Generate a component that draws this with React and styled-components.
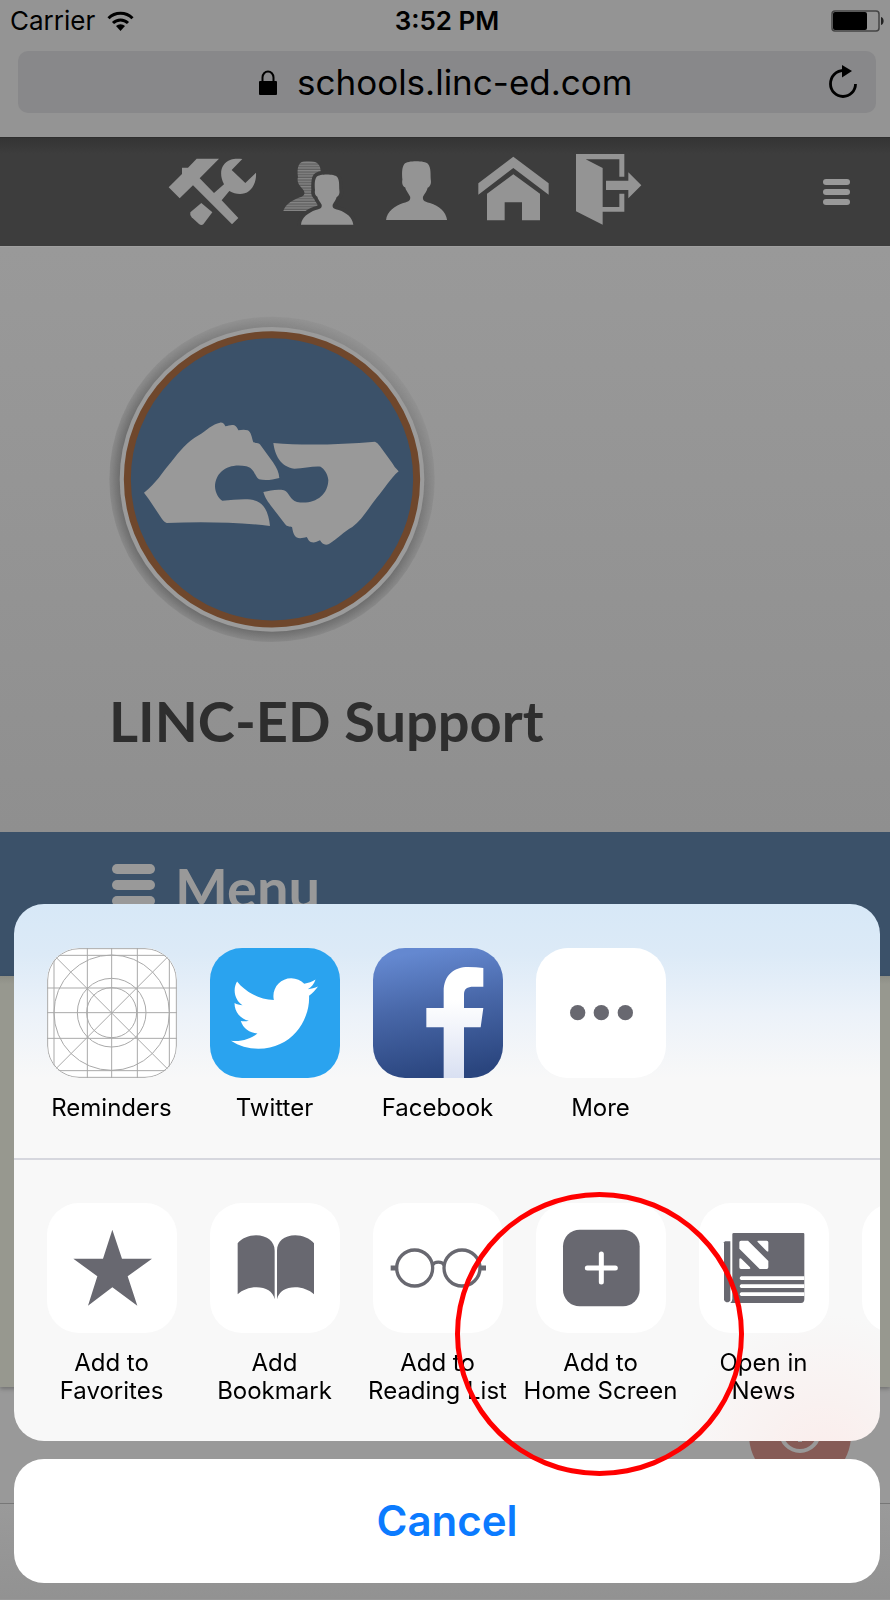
import React from "react";
import styled, { createGlobalStyle } from "styled-components";
import { FaTwitter } from "react-icons/fa";

const GlobalStyle = createGlobalStyle`
  * { box-sizing: border-box; }
  body {
    margin: 0;
    background: #999999;
    font-family: Inter, "Liberation Sans", sans-serif;
    color: #000;
  }
  button { font: inherit; color: inherit; border: 0; padding: 0; background: none; cursor: pointer; }
  h1, p { margin: 0; }
  svg { display: block; flex: none; }
`;

const Page = styled.div`
  position: relative;
  min-height: 100vh;
  display: flex;
  flex-direction: column;
  overflow: hidden;
`;

const BrowserChrome = styled.header`
  background: #949494;
  padding-bottom: 24px;
`;

const StatusBar = styled.div`
  display: grid;
  grid-template-columns: 1fr auto 1fr;
  align-items: center;
  height: 42px;
  margin-bottom: 9px;
  padding: 0 6px 0 10px;
  font-size: 26px;
  line-height: 28px;
`;

const Carrier = styled.div`
  display: flex;
  align-items: center;
  gap: 12px;
`;

const Clock = styled.time`
  font-weight: 600;
`;

const BatterySlot = styled.div`
  justify-self: end;
`;

const AddressBar = styled.form`
  display: grid;
  grid-template-columns: 1fr auto 1fr;
  align-items: center;
  height: 62px;
  margin: 0 14px 0 18px;
  padding: 0 18px 0 16px;
  border-radius: 10px;
  background: #88888a;
`;

const AddressLabel = styled.label`
  grid-column: 2;
  display: flex;
  align-items: center;
  gap: 20px;
`;

const AddressInput = styled.input`
  width: 336px;
  padding: 0;
  border: 0;
  outline: 0;
  background: none;
  font: 400 35px/44px Inter, "Liberation Sans", sans-serif;
  color: #000;
`;

const ReloadButton = styled.button`
  justify-self: end;
`;

const Toolbar = styled.nav`
  display: flex;
  align-items: center;
  gap: 24px;
  height: 109px;
  padding: 0 40px 0 168px;
  border-top: 1px solid #2e2e2e;
  background: linear-gradient(#343434, #3d3d3d 16px);
  color: #949494;
`;

const ToolLink = styled.a`
  display: block;
  padding-bottom: 4px;
  color: inherit;
`;

const MoreTools = styled.button`
  margin-left: auto;
`;

const Hero = styled.section`
  height: 586px;
  padding: 69px 40px 0 109px;
  border-top: 1px solid #a0a0a0;
  background: linear-gradient(#999999, #8f8f8f);
`;

const HeroTitle = styled.h1`
  margin-top: 43px;
  font: 700 56px/64px Lato, "Liberation Sans", sans-serif;
  color: #2e2e2e;
  white-space: nowrap;
`;

const MenuBar = styled.button`
  display: flex;
  align-items: flex-start;
  gap: 20px;
  height: 144px;
  padding: 24px 40px 0 112px;
  background: #3b5169;
  color: #999999;
  font: 700 56px/64px Lato, "Liberation Sans", sans-serif;
  text-align: left;
`;

const MenuGlyph = styled.span`
  display: flex;
  flex-direction: column;
  gap: 6px;
  padding-top: 8px;
`;

const GlyphBar = styled.span`
  width: 43px;
  height: 10px;
  border-radius: 5px;
  background: currentColor;
`;

const Panel = styled.section`
  height: 411px;
  background: linear-gradient(#8c8d85, #97988f 8px);
  box-shadow: 0 2px 4px rgba(0, 0, 0, 0.25);
`;

const Footer = styled.footer`
  flex: 1;
  padding-top: 116px;
`;

const FooterRule = styled.div`
  height: 100%;
  min-height: 96px;
  border-top: 1px solid #777;
  background: linear-gradient(#9a9a9a, #929292);
`;

const FloatingAction = styled.button`
  position: absolute;
  right: 39px;
  bottom: 114px;
`;

const Overlay = styled.div`
  position: fixed;
  inset: 0;
  display: flex;
  flex-direction: column;
  justify-content: flex-end;
  gap: 18px;
  padding: 0 10px 17px 14px;
`;

const SheetWrap = styled.div`
  position: relative;
  z-index: 1;
`;

const Sheet = styled.div`
  border-radius: 30px;
  overflow: hidden;
  background:
    radial-gradient(circle at 810px 560px, rgba(255, 215, 210, 0.35), rgba(255, 225, 220, 0) 150px),
    linear-gradient(#d7e8f7, #dceaf7 50px, #ecf2f9 110px, #f8f8f8 174px);
`;

const ShareRow = styled.div`
  display: flex;
  padding: ${(p) => (p.$divided ? "44px 0 36px 16px" : "43px 0 36px 16px")};
  border-bottom: ${(p) => (p.$divided ? "2px solid #d6d7de" : "0")};
  overflow: hidden;
`;

const ShareItem = styled.button`
  flex: 0 0 163px;
  display: flex;
  flex-direction: column;
  align-items: center;
  gap: 16px;
  font-size: 24px;
  line-height: 28px;
  text-align: center;
  white-space: pre;
`;

const Tile = styled.span`
  display: block;
  width: 130px;
  height: 130px;
  border-radius: 32px;
  overflow: hidden;
  background: ${(p) => p.$fill || "#fff"};
  color: #686870;
`;

const TileCenter = styled.span`
  display: grid;
  place-items: center;
  height: 100%;
  color: #fff;
`;

const Highlight = styled.span`
  position: absolute;
  left: 441px;
  bottom: -35px;
  width: 289px;
  height: 284px;
  border: 5px solid #ff0000;
  border-radius: 50%;
  pointer-events: none;
`;

const CancelButton = styled.button`
  height: 124px;
  border-radius: 30px;
  background: #fff;
  color: #0b7bff;
  font-size: 42px;
  font-weight: 600;
  line-height: 52px;
`;

const PERSON =
  "M453 284C455 262 475 248 497 240C514 236 516 232 515 224C510 214 503 207 502 200C496 198 493 190 495 180C494 165 493 150 500 140C508 131 553 131 561 140C569 150 567 165 568 180C570 190 567 198 560 201C558 210 552 216 548 224C547 232 549 236 566 240C590 248 607 262 610 284Z";

const WifiIcon = () => (
  <svg width="27" height="20" viewBox="0 0 27 20" aria-hidden="true">
    <path d="M1.5 7.3a17 17 0 0 1 24 0" fill="none" stroke="#000" strokeWidth="3" />
    <path d="M6 12a10.600 10.600 0 0 1 15 0" fill="none" stroke="#000" strokeWidth="3" />
    <path d="M9 15a6.400 6.400 0 0 1 9 0L13.500 20Z" />
  </svg>
);

const BatteryIcon = () => (
  <svg width="53" height="22" viewBox="0 0 53 22" role="img" aria-label="Battery">
    <rect x="1" y="1" width="47" height="20" rx="3" fill="none" stroke="#444" strokeWidth="1.500" />
    <rect x="2" y="2" width="34" height="18" rx="2" />
    <path d="M50 7C53.500 8 53.500 14 50 15Z" fill="#222" />
  </svg>
);

const LockIcon = () => (
  <svg width="18" height="25" viewBox="0 0 18 25" aria-hidden="true">
    <rect y="11" width="18" height="14" rx="1" />
    <path d="M3.500 12V7.500a5.500 6 0 0 1 11 0V12" fill="none" stroke="#000" strokeWidth="2" />
  </svg>
);

const ReloadIcon = () => (
  <svg width="30" height="34" viewBox="0 0 30 34" aria-hidden="true">
    <path d="M18 5.500C7 5 2.500 12 2.500 19A12.500 12.500 0 0 0 27.500 19" fill="none" stroke="#000" strokeWidth="2.800" />
    <path d="M14 0L24 6L14 12.500Z" />
  </svg>
);

const ToolsIcon = () => (
  <svg width="90" height="72" viewBox="54 72 270 216" fill="currentColor" aria-hidden="true">
    <path d="M56 172L96 132V113H114L140 86H207L149 145L192 189L222 163C206 132 212 100 242 89C253 85 267 86 277 87L245 120L286 159L318 128C320 158 306 182 284 190C267 195 252 190 238 183L215 211L265 264L246 283L129 166L89 205Z" />
    <path d="M121 247L154 219L187 247L160 283Q154 287 147 282L125 262Q119 254 121 247Z" />
  </svg>
);

const PeopleIcon = () => (
  <svg width="74" height="72" viewBox="396 72 222 216" fill="currentColor" aria-hidden="true">
    <defs>
      <pattern id="stripes" width="8" height="8" patternUnits="userSpaceOnUse">
        <rect width="8" height="8" fill="#606060" />
        <rect width="8" height="4" fill="#858585" />
      </pattern>
    </defs>
    <path
      fill="url(#stripes)"
      d="M400 243C406 220 432 208 455 200C466 195 466 185 457 176C446 166 440 152 444 142C440 110 446 93 470 93C500 91 512 102 512 125V170L500 243Z"
    />
    <path d={PERSON} stroke="#3d3d3d" strokeWidth="22" />
    <path d={PERSON} />
  </svg>
);

const PersonIcon = () => (
  <svg width="72" height="72" viewBox="690 72 216 216" fill="currentColor" aria-hidden="true">
    <path d={PERSON} transform="translate(180 -62) scale(1.166 1.170)" />
  </svg>
);

const HomeIcon = () => (
  <svg width="76" height="72" viewBox="168 72 228 216" fill="currentColor" aria-hidden="true">
    <path d="M175 160L280 80L386 160V194L280 114L175 194Z" />
    <path d="M201 191L280 133L360 191V271H306V217H254V271H201Z" />
  </svg>
);

const ExitIcon = () => (
  <svg width="66" height="72" viewBox="467 72 198 216" fill="currentColor" aria-hidden="true">
    <path d="M467 72H612V140H597V88H496L547 114V231H597V191H612V245H547V284L467 244Z" />
    <path d="M557 152H624V127L663 166L624 205V180H557Z" />
  </svg>
);

const HandsLogo = () => (
  <svg width="330" height="330" viewBox="27 48 990 990" role="img" aria-label="LINC-ED logo">
    <defs>
      <radialGradient id="halo" gradientUnits="userSpaceOnUse" cx="516" cy="538" r="490">
        <stop offset="0.920" stopColor="#686868" />
        <stop offset="0.960" stopColor="#757575" stopOpacity="0.850" />
        <stop offset="1" stopColor="#828282" stopOpacity="0.550" />
      </radialGradient>
      <linearGradient id="haloFade" x1="0.750" y1="0.100" x2="0.250" y2="0.900">
        <stop offset="0" stopColor="#fff" stopOpacity="0.350" />
        <stop offset="0.600" stopColor="#fff" />
      </linearGradient>
      <mask id="haloMask">
        <rect x="20" y="40" width="1000" height="1000" fill="url(#haloFade)" />
      </mask>
    </defs>
    <circle cx="516" cy="538" r="488" fill="url(#halo)" mask="url(#haloMask)" />
    <circle cx="516" cy="538" r="457" fill="#9b9b9b" />
    <circle cx="516" cy="538" r="434" fill="#3b5169" stroke="#6f472c" strokeWidth="21" />
    <path
      fill="#999"
      d="M132 578C170 548 184 520 214 485C240 453 262 425 296 406C320 390 338 372 360 368C368 367 373 371 376 379C386 377 394 373 403 376C410 379 412 385 415 391C424 389 435 388 443 391C454 396 455 413 460 427C468 430 478 428 483 437L519 487C530 504 537 517 538 534C517 540 495 542 477 538C464 530 464 505 439 499C386 488 346 515 345 560C346 579 356 595 367 602C410 600 452 591 479 608C500 622 507 650 510 678C410 666 300 664 200 669C192 667 187 658 180 648L146 597Z"
    />
    <path
      fill="#999"
      d="M520 429C620 438 724 433 825 425Q832 427 840 439L876 488Q882 500 896 514C870 536 855 565 829 595C805 626 785 660 757 681C732 694 715 715 687 732C675 737 666 732 660 721C650 725 643 730 632 726C625 723 625 717 620 711C610 714 598 717 589 712C579 703 579 693 576 681C568 679 562 681 555 672L518 624C503 605 495 593 490 576C511 572 530 567 552 571C569 578 569 600 591 606C641 615 684 588 685 540C683 521 672 506 662 500C642 497 612 506 583 506C540 500 525 465 520 429Z"
    />
  </svg>
);

const GridArt = () => (
  <svg width="130" height="130" viewBox="139 204 390 390" fill="none" stroke="#a9a9a9" strokeWidth="3" aria-hidden="true">
    <rect x="141" y="206" width="386" height="386" rx="94" />
    <path d="M160 204V594M260 204V594M333 204V594M410 204V594M506 204V594M139 226H529M139 324H529M139 398H529M139 475H529M139 572H529M160 226L506 572M506 226L160 572" />
    <circle cx="333" cy="398" r="173" />
    <circle cx="333" cy="398" r="103" />
    <circle cx="333" cy="398" r="75" />
  </svg>
);

const FacebookArt = () => (
  <svg width="130" height="130" viewBox="0 0 390 390" aria-hidden="true">
    <defs>
      <linearGradient id="fbGlyph" x1="0" y1="0" x2="0" y2="1">
        <stop offset="0.300" stopColor="#fff" />
        <stop offset="1" stopColor="#d9e0f2" />
      </linearGradient>
    </defs>
    <path
      fill="url(#fbGlyph)"
      d="M212 390V238H160V180H212V130C212 80 245 57 285 57Q310 57 331 60V116H302C282 116 273 122 273 140V180H331L323 238H273V390Z"
    />
  </svg>
);

const DotsArt = () => (
  <svg width="130" height="130" viewBox="0 0 390 390" fill="currentColor" aria-hidden="true">
    <circle cx="125" cy="194" r="23" />
    <circle cx="196" cy="194" r="23" />
    <circle cx="268" cy="194" r="23" />
  </svg>
);

const StarArt = () => (
  <svg width="130" height="130" viewBox="139 69 390 390" fill="currentColor" aria-hidden="true">
    <path d="M335 149L364 236H454L381 289L410 377L335 322L262 377L290 289L218 236H307Z" />
  </svg>
);

const BookArt = () => (
  <svg width="130" height="130" viewBox="628 69 390 390" fill="currentColor" aria-hidden="true">
    <path d="M711 190C722 175 745 166 766 166C800 166 822 185 822 212V358C818 335 795 322 768 322C745 322 725 330 711 343Z" />
    <path d="M940 190C928 175 905 166 884 166C850 166 829 185 829 212V358C834 335 856 322 883 322C905 322 926 330 940 343Z" />
  </svg>
);

const GlassesArt = () => (
  <svg width="130" height="130" viewBox="1118 69 390 390" fill="none" stroke="currentColor" strokeWidth="10" aria-hidden="true">
    <circle cx="1243" cy="264" r="54" />
    <circle cx="1385" cy="264" r="54" />
    <path d="M1296 256C1302 243 1326 243 1332 256" />
    <path d="M1171 264H1188M1440 264H1457" strokeWidth="15" />
  </svg>
);

const PlusArt = () => (
  <svg width="130" height="130" viewBox="319 69 390 390" aria-hidden="true">
    <rect x="400" y="149" width="230" height="230" rx="50" fill="currentColor" />
    <path d="M515 222V306M473 264H557" stroke="#fff" strokeWidth="15" strokeLinecap="round" />
  </svg>
);

const NewsArt = () => (
  <svg width="130" height="130" viewBox="808 69 390 390" aria-hidden="true">
    <path d="M886 184H902V362L896 367H890Q883 366 883 358V187Z" fill="currentColor" />
    <path d="M912 159H1121Q1124 159 1124 163V358Q1124 369 1114 369H902Q908 364 908 356V163Q908 159 912 159Z" fill="currentColor" />
    <path
      fill="#fff"
      d="M934 182H955L1016 243V262Q1016 267 1011 267H990L929 206V187Q929 182 934 182ZM986 182H1011Q1016 182 1016 187V214Q1014 216 1010 212L984 186Q981 182 986 182ZM935 236L961 262Q964 267 959 267H934Q929 267 929 262V238Q930 233 935 236ZM934 289H1124V300H934Q926 295 934 289ZM934 313H1124V324H934Q926 319 934 313ZM934 337H1124V348H934Q926 343 934 337Z"
    />
  </svg>
);

const apps = [
  { label: "Reminders", art: <GridArt /> },
  { label: "Twitter", fill: "#2aa3ef", art: <TileCenter><FaTwitter size={87} /></TileCenter> },
  { label: "Facebook", fill: "linear-gradient(170deg, #6488d0 8%, #4867a8 45%, #2a457e 92%)", art: <FacebookArt /> },
  { label: "More", art: <DotsArt /> },
];

const actions = [
  { label: "Add to\nFavorites", art: <StarArt /> },
  { label: "Add\nBookmark", art: <BookArt /> },
  { label: "Add to\nReading List", art: <GlassesArt /> },
  { label: "Add to\nHome Screen", art: <PlusArt /> },
  { label: "Open in\nNews", art: <NewsArt /> },
  { label: "", name: "Next action" },
];

const tools = [
  { name: "Tools", icon: <ToolsIcon /> },
  { name: "People", icon: <PeopleIcon /> },
  { name: "Profile", icon: <PersonIcon /> },
  { name: "Home", icon: <HomeIcon /> },
  { name: "Sign out", icon: <ExitIcon /> },
];

function ShareOption({ label, name, fill, art }) {
  return (
    <ShareItem type="button" aria-label={name}>
      <Tile $fill={fill}>{art}</Tile>
      {label}
    </ShareItem>
  );
}

export default function App() {
  return (
    <Page>
      <GlobalStyle />
      <BrowserChrome>
        <StatusBar>
          <Carrier>Carrier <WifiIcon /></Carrier>
          <Clock>3:52 PM</Clock>
          <BatterySlot><BatteryIcon /></BatterySlot>
        </StatusBar>
        <AddressBar onSubmit={(e) => e.preventDefault()}>
          <AddressLabel>
            <LockIcon />
            <AddressInput aria-label="Address" defaultValue="schools.linc-ed.com" />
          </AddressLabel>
          <ReloadButton type="button" aria-label="Reload"><ReloadIcon /></ReloadButton>
        </AddressBar>
      </BrowserChrome>

      <Toolbar>
        {tools.map((t) => (
          <ToolLink key={t.name} href="#" aria-label={t.name}>{t.icon}</ToolLink>
        ))}
        <MoreTools type="button" aria-label="More tools">
          <svg width="27" height="27" viewBox="0 0 27 27" fill="#999" aria-hidden="true">
            <rect width="27" height="6" rx="3" />
            <rect y="10" width="27" height="6" rx="3" />
            <rect y="20" width="27" height="6" rx="3" />
          </svg>
        </MoreTools>
      </Toolbar>

      <Hero>
        <HandsLogo />
        <HeroTitle>LINC-ED Support</HeroTitle>
      </Hero>

      <MenuBar type="button">
        <MenuGlyph>
          <GlyphBar />
          <GlyphBar />
          <GlyphBar />
        </MenuGlyph>
        Menu
      </MenuBar>
      <Panel />
      <Footer><FooterRule /></Footer>
      <FloatingAction type="button" aria-label="Add">
        <svg width="102" height="102" viewBox="0 0 102 102" aria-hidden="true">
          <circle cx="51" cy="51" r="51" fill="#865b56" />
          <circle cx="51" cy="48" r="19" fill="none" stroke="#999" strokeWidth="4" />
          <path d="M51 38V58M41 48H61" stroke="#999" strokeWidth="4" />
        </svg>
      </FloatingAction>

      <Overlay>
        <SheetWrap>
          <Sheet role="dialog" aria-label="Share">
            <ShareRow $divided>
              {apps.map((a) => <ShareOption key={a.label} {...a} />)}
            </ShareRow>
            <ShareRow>
              {actions.map((a) => <ShareOption key={a.label} {...a} />)}
            </ShareRow>
          </Sheet>
          <Highlight />
        </SheetWrap>
        <CancelButton type="button">Cancel</CancelButton>
      </Overlay>
    </Page>
  );
}
